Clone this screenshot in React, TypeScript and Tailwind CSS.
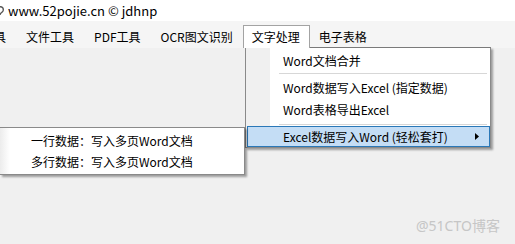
import React from "react";

const font = { fontFamily: '"Segoe UI", "Noto Sans CJK SC", "Noto Sans", sans-serif' };

export default function App() {
  return (
    <div
      className="relative w-[515px] h-[244px] overflow-hidden bg-[#f0f0f0] text-black text-[12px]"
      style={font}
    >
      {/* title row */}
      <div className="h-[21px] bg-white flex items-center">
        <svg width="6" height="14" viewBox="0 0 6 14" className="ml-[-1px]">
          <path d="M0 3 C3 2 5 4 4 7 C3 9 1 9 1 11" stroke="#555" strokeWidth="1.4" fill="none" />
        </svg>
        <span className="ml-[3px] text-[13px] leading-none">www.52pojie.cn © jdhnp</span>
      </div>

      {/* menu bar */}
      <div className="h-[27px] bg-[#f5f5f5] flex items-end">
        <div className="flex ml-[-28px] h-[22px]">
          {["工具", "文件工具", "PDF工具", "OCR图文识别"].map((t) => (
            <div key={t} className="px-[9px] flex items-center border border-transparent">
              {t}
            </div>
          ))}
          <div className="pl-[8px] pr-[9px] flex items-center border border-b-0 border-[#a3a3a3] bg-white relative z-10 h-[23px] -mt-px">
            文字处理
          </div>
          <div className="px-[9px] flex items-center">电子表格</div>
        </div>
      </div>

      {/* dropdown */}
      <div className="absolute left-[245px] top-[47px] w-[246px] border border-[#8a8a8a] border-t-[#7a7a7a] bg-white flex shadow-[2px_2px_2px_rgba(0,0,0,0.35)]">
        <div className="absolute left-0 top-0 bottom-0 w-[24px] bg-[#f0f0f0]" />
        <div className="relative flex flex-col w-full pt-[2px]">
          <div className="h-[22px] flex items-center pl-[37px]">Word文档合并</div>
          <div className="mt-[1px] mb-[3px] ml-[33px] mr-[3px] h-px bg-[#d7d7d7]" />
          <div className="h-[22px] flex items-center pl-[37px]">Word数据写入Excel (指定数据)</div>
          <div className="h-[22px] flex items-center pl-[37px]">Word表格导出Excel</div>
          <div className="mt-[3px] mb-[1px] ml-[33px] mr-[3px] h-px bg-[#d7d7d7]" />
          <div className="h-[21px] ml-[1px] flex items-center pl-[35px] bg-[#c4ddf5] border border-[#2a78b8]">
            <span className="flex-1">Excel数据写入Word (轻松套打)</span>
            <svg width="4" height="7" viewBox="0 0 4 7" className="mr-[10px]">
              <path d="M0 0 L4 3.5 L0 7 Z" fill="#000" />
            </svg>
          </div>
        </div>
      </div>

      {/* submenu */}
      <div className="absolute left-0 top-[127px] w-[245px] border-y border-r border-[#8a8a8a] bg-white shadow-[2px_2px_2px_rgba(0,0,0,0.35)] z-20">
        <div className="absolute left-0 top-0 bottom-0 w-[10px] bg-gradient-to-r from-[#ececec] to-white" />
        <div className="relative flex flex-col pt-[2px] pb-[2px]">
          <div className="h-[21px] flex items-center pl-[31px]">一行数据：写入多页Word文档</div>
          <div className="h-[21px] flex items-center pl-[31px]">多行数据：写入多页Word文档</div>
        </div>
      </div>

      {/* watermark */}
      <div
        className="absolute left-[416px] top-[216px] text-[14px] leading-[20px] text-[#c6c6c6]"
        style={{ fontFamily: '"Noto Sans", "Noto Sans CJK SC", sans-serif' }}
      >
        @51CTO博客
      </div>
    </div>
  );
}
